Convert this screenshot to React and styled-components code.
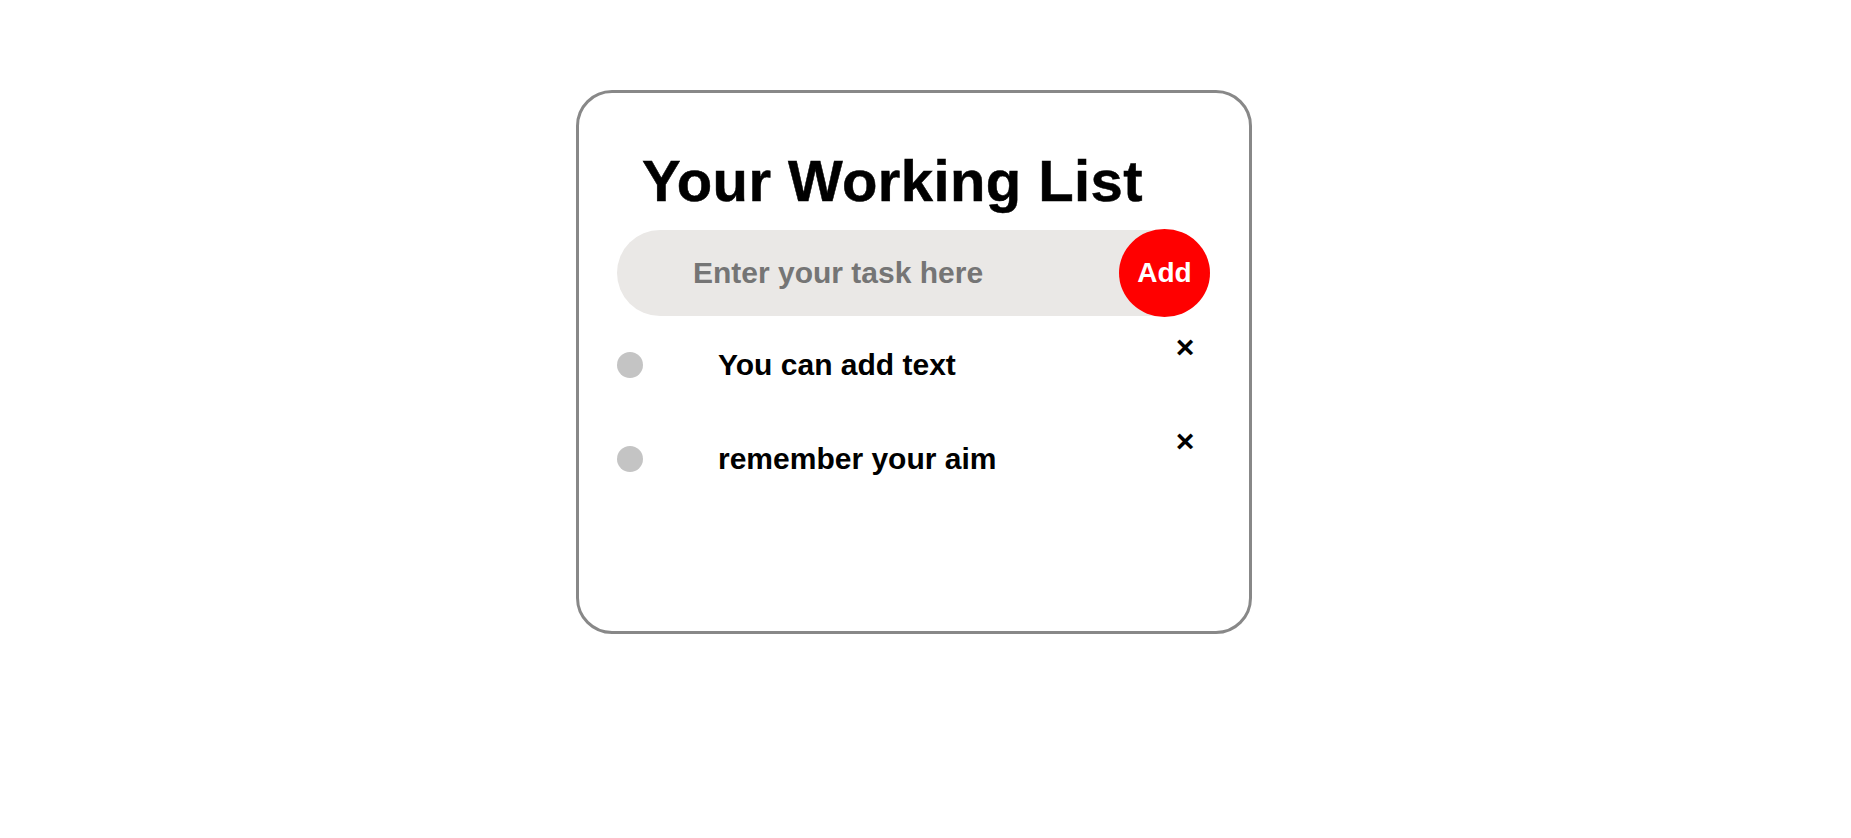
import React from "react";
import styled, { createGlobalStyle } from "styled-components";

const Global = createGlobalStyle`
  html, body { margin: 0; padding: 0; background: #fff; }
  body { font-family: "Liberation Sans", Arial, sans-serif; }
`;

const Page = styled.div`
  display: flex;
  justify-content: center;
  padding: 90px 23px 0 0;
`;

const Card = styled.div`
  box-sizing: border-box;
  width: 676px;
  height: 544px;
  border: 3px solid #888888;
  border-radius: 36px;
  padding: 0 38px;
`;

const Title = styled.h1`
  margin: 59px 0 0 25px;
  font-size: 58px;
  line-height: 58px;
  font-weight: 700;
  letter-spacing: 0.4px;
  color: #000;
  -webkit-text-stroke: 0.5px #000;
`;

const InputRow = styled.div`
  display: flex;
  align-items: center;
  margin-top: 20px;
  width: 593px;
  height: 86px;
  border-radius: 43px;
  background: #eae8e6;
`;

const TaskInput = styled.input`
  flex: 1;
  min-width: 0;
  height: 100%;
  border: none;
  outline: none;
  background: transparent;
  padding: 0 0 0 76px;
  font-family: "Liberation Sans", Arial, sans-serif;
  font-size: 30px;
  font-weight: 700;
  color: #000;
  &::placeholder { color: #757575; }
`;

const AddButton = styled.button`
  flex: none;
  width: 91px;
  height: 88px;
  border: none;
  border-radius: 50%;
  background: #ff0000;
  color: #fff;
  font-family: "Liberation Sans", Arial, sans-serif;
  font-size: 28px;
  font-weight: 700;
  cursor: pointer;
  padding: 0;
`;

const List = styled.ul`
  list-style: none;
  margin: 36px 0 0;
  padding: 0;
  display: flex;
  flex-direction: column;
  gap: 68px;
`;

const Item = styled.li`
  position: relative;
  display: flex;
  align-items: center;
  height: 26px;
`;

const Dot = styled.span`
  flex: none;
  width: 26px;
  height: 26px;
  border-radius: 50%;
  background: ${(p) => (p.$done ? "#ff0000" : "#c4c4c4")};
`;

const ItemText = styled.span`
  margin-left: 75px;
  font-size: 30px;
  font-weight: 700;
  color: #000;
`;

const Remove = styled.span`
  position: absolute;
  right: 16px;
  top: -15px;
  width: 20px;
  height: 20px;
  display: flex;
  align-items: center;
  justify-content: center;
  font-size: 32px;
  font-weight: 700;
  line-height: 20px;
  color: #000;
  cursor: pointer;
`;

export default function App() {
  const tasks = ["You can add text", "remember your aim"];
  return (
    <>
      <Global />
      <Page>
        <Card>
          <Title>Your Working List</Title>
          <InputRow>
            <TaskInput placeholder="Enter your task here" />
            <AddButton>Add</AddButton>
          </InputRow>
          <List>
            {tasks.map((t) => (
              <Item key={t}>
                <Dot />
                <ItemText>{t}</ItemText>
                <Remove>×</Remove>
              </Item>
            ))}
          </List>
        </Card>
      </Page>
    </>
  );
}
